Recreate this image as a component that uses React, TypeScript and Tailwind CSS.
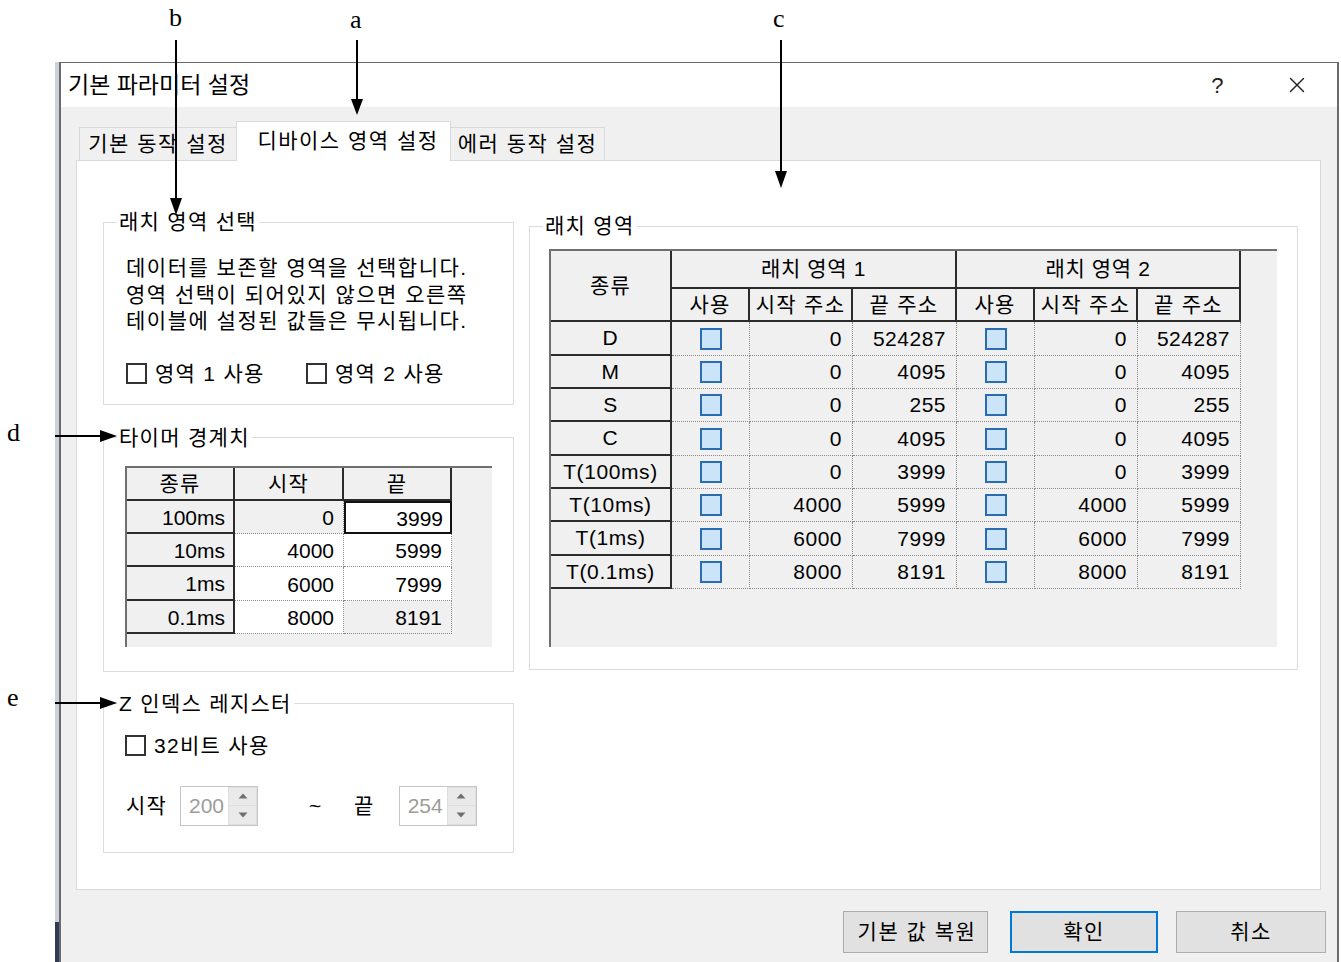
import { X } from 'lucide-react';

const leftRows = [
  ['100ms', '0', '3999'],
  ['10ms', '4000', '5999'],
  ['1ms', '6000', '7999'],
  ['0.1ms', '8000', '8191'],
];

const latchRows = [
  ['D', '0', '524287'],
  ['M', '0', '4095'],
  ['S', '0', '255'],
  ['C', '0', '4095'],
  ['T(100ms)', '0', '3999'],
  ['T(10ms)', '4000', '5999'],
  ['T(1ms)', '6000', '7999'],
  ['T(0.1ms)', '8000', '8191'],
];

function CheckBox({ label, className = '' }: { label: string; className?: string }) {
  return (
    <div className={`flex h-[22px] items-center gap-[8px] ${className}`}>
      <span className="h-[21px] w-[21px] border-2 border-[#333] bg-white" />
      <span className="leading-[22px]">{label}</span>
    </div>
  );
}

function Spinner({ value }: { value: string }) {
  return (
    <div className="flex h-[40px] w-[78px] border border-[#c6c6c6] bg-white">
      <div className="flex flex-1 items-center pl-[8px] tracking-normal text-[#9c9c9c]">{value}</div>
      <div className="flex w-[29px] flex-col gap-px bg-[#dedede] p-px">
        <div className="flex flex-1 items-center justify-center bg-[#eaeaea]">
          <svg width="10" height="6" viewBox="0 0 10 6"><path d="M5 0.5L9.5 5.5H0.5z" fill="#6f6f6f" /></svg>
        </div>
        <div className="flex flex-1 items-center justify-center bg-[#eaeaea]">
          <svg width="10" height="6" viewBox="0 0 10 6"><path d="M0.5 0.5H9.5L5 5.5z" fill="#6f6f6f" /></svg>
        </div>
      </div>
    </div>
  );
}

function Group({ title, children }: { title: string; children: React.ReactNode }) {
  return (
    <fieldset className="border border-[#dcdcdc]">
      <legend className="ml-[13px] px-[2px] leading-[24px]">{title}</legend>
      {children}
    </fieldset>
  );
}

function TimerTable() {
  const numCell = 'flex items-center justify-end border-r border-b border-dotted border-[#8a8a8a] pt-[3px] pr-[9px]';
  return (
    <div className="h-[181px] w-[367px] border-t-2 border-l-2 border-[#6f6f6f] bg-[#f0f0f0] tracking-normal">
      <div className="grid grid-cols-[108px_109px_108px] grid-rows-[33px_33px_33px_34px_33px]">
        {['종류', '시작', '끝'].map((h) => (
          <div key={h} className="flex items-center justify-center border-r-2 border-b-2 border-[#2b2b2b] pt-[2px] tracking-[1.3px]">
            {h}
          </div>
        ))}
        {leftRows.map(([name, start, end], i) => (
          <div key={name} className="contents">
            <div className="flex items-center justify-end border-r-2 border-b-2 border-[#2b2b2b] pt-[3px] pr-[8px]">{name}</div>
            <div className={`${numCell} ${i === 0 ? 'bg-[#f0f0f0]' : 'bg-white'}`}>{start}</div>
            {i === 0 ? (
              <div className="flex items-center justify-end border-2 border-[#111] bg-white pt-[3px] pr-[7px]">{end}</div>
            ) : (
              <div className={`${numCell} ${i === 3 ? 'bg-[#f0f0f0]' : 'bg-white'}`}>{end}</div>
            )}
          </div>
        ))}
      </div>
    </div>
  );
}

function LatchTable() {
  const head = 'flex items-center justify-center border-r-2 border-b-2 border-[#2b2b2b]';
  const cell = 'flex items-center justify-end border-r border-b border-dotted border-[#8a8a8a] pr-[10px] tracking-[0.5px]';
  return (
    <div className="h-[398px] w-[728px] border-t-2 border-l-2 border-[#6f6f6f] bg-[#f0f0f0]">
      <div className="grid grid-cols-[121px_78px_103px_104px_78px_103px_103px] grid-rows-[38px_33px_34px_33px_33px_34px_33px_33px_34px_33px]">
        <div className={`${head} row-span-2`}>종류</div>
        <div className={`${head} col-span-3 tracking-[0.6px]`}>래치 영역 1</div>
        <div className={`${head} col-span-3 tracking-[0.6px]`}>래치 영역 2</div>
        {['사용', '시작 주소', '끝 주소', '사용', '시작 주소', '끝 주소'].map((h, i) => (
          <div key={i} className={head}>
            {h}
          </div>
        ))}
        {latchRows.map(([name, start, end]) => (
          <div key={name} className="contents">
            <div className={`${head} tracking-[0.6px]`}>{name}</div>
            {[0, 1].map((g) => (
              <div key={g} className="contents">
                <div className="flex items-center justify-center border-r border-b border-dotted border-[#8a8a8a]">
                  <span className="h-[22px] w-[22px] border-2 border-[#2a6cb2] bg-[#cce4f7]" />
                </div>
                <div className={cell}>{start}</div>
                <div className={cell}>{end}</div>
              </div>
            ))}
          </div>
        ))}
      </div>
    </div>
  );
}

export default function App() {
  return (
    <div className="relative h-[962px] w-[1341px] overflow-hidden bg-white font-['Liberation_Sans','Noto_Sans_CJK_KR',sans-serif] text-[21px] tracking-[1.3px] text-black">
      <div className="flex pt-[62px] pl-[55px]">
        <div className="flex w-[4px] flex-col">
          <div className="h-[860px] bg-[#cdd1d9]" />
          <div className="flex-1 bg-[#2e3b56]" />
        </div>
        <div className="flex h-[900px] w-[1280px] flex-col border-t border-r-2 border-l-2 border-[#6a6a6a]">
          {/* title bar */}
          <div className="flex h-[44px] items-center justify-between bg-white pl-[7px] pr-[17px]">
            <span className="text-[23px] leading-none tracking-normal">기본 파라미터 설정</span>
            <div className="flex items-center gap-[36px]">
              <span className="w-[40px] text-center text-[22px] text-[#222]">?</span>
              <span className="flex w-[46px] justify-center">
                <X size={26} strokeWidth={1.3} color="#222" />
              </span>
            </div>
          </div>

          {/* client */}
          <div className="flex flex-1 flex-col bg-[#f0f0f0] pt-[14px]">
            <div className="ml-[18px] flex h-[39px] items-end tracking-[1.5px]">
              <div className="flex h-[33px] w-[157px] items-center justify-center border-t border-l border-[#d9d9d9] bg-[#f0f0f0]">
                기본 동작 설정
              </div>
              <div className="relative z-10 mb-[-1px] flex h-[40px] w-[215px] items-center justify-center border-x border-t border-[#d9d9d9] bg-white pb-[2px] pl-[9px]">
                디바이스 영역 설정
              </div>
              <div className="flex h-[33px] w-[154px] items-center justify-center border-t border-r border-[#d9d9d9] bg-[#f0f0f0]">
                에러 동작 설정
              </div>
            </div>

            <div className="ml-[15px] flex h-[730px] w-[1245px] gap-[15px] border border-[#d9d9d9] bg-white pt-[49px] pl-[26px]">
              <div className="flex w-[411px] flex-col">
                <Group title="래치 영역 선택">
                  <div className="pt-[21px] pb-[19px] pl-[22px]">
                    <p className="leading-[26.5px] tracking-[1.5px]">
                      데이터를 보존할 영역을 선택합니다.
                      <br />
                      영역 선택이 되어있지 않으면 오른쪽
                      <br />
                      테이블에 설정된 값들은 무시됩니다.
                    </p>
                    <div className="mt-[28px] flex">
                      <CheckBox label="영역 1 사용" className="w-[180px]" />
                      <CheckBox label="영역 2 사용" />
                    </div>
                  </div>
                </Group>

                <div className="mt-[21px]">
                  <Group title="타이머 경계치">
                    <div className="pt-[16px] pb-[24px] pl-[21px]">
                      <TimerTable />
                    </div>
                  </Group>
                </div>

                <div className="mt-[20px]">
                  <Group title="Z 인덱스 레지스터">
                    <div className="pt-[19px] pb-[26px] pl-[21px]">
                      <CheckBox label="32비트 사용" />
                      <div className="mt-[29px] flex items-center">
                        <span className="w-[55px] pl-[1px]">시작</span>
                        <Spinner value="200" />
                        <span className="ml-[51px] w-[12px]">~</span>
                        <span className="ml-[33px]">끝</span>
                        <span className="ml-[24px]">
                          <Spinner value="254" />
                        </span>
                      </div>
                    </div>
                  </Group>
                </div>
              </div>

              <div className="mt-[4px] w-[769px]">
                <Group title="래치 영역">
                  <div className="pt-[11px] pb-[22px] pl-[19px]">
                    <LatchTable />
                  </div>
                </Group>
              </div>
            </div>

            <div className="mt-[21px] flex tracking-[1.5px]">
              <div className="ml-[782px] flex h-[42px] w-[145px] items-center justify-center border border-[#adadad] bg-[#e1e1e1] pl-[3px]">
                기본 값 복원
              </div>
              <div className="ml-[22px] flex h-[42px] w-[148px] items-center justify-center border-2 border-[#0078d7] bg-[#e1e1e1]">
                확인
              </div>
              <div className="ml-[18px] flex h-[42px] w-[150px] items-center justify-center border border-[#adadad] bg-[#e1e1e1]">
                취소
              </div>
            </div>
          </div>
        </div>
      </div>

      {/* annotation letters and arrows */}
      <span className="absolute top-[-2px] left-[169px] font-['Liberation_Serif',serif] text-[26px] tracking-normal">b</span>
      <span className="absolute top-[0px] left-[350px] font-['Liberation_Serif',serif] text-[26px] tracking-normal">a</span>
      <span className="absolute top-[-1px] left-[773px] font-['Liberation_Serif',serif] text-[26px] tracking-normal">c</span>
      <span className="absolute top-[413px] left-[7px] font-['Liberation_Serif',serif] text-[26px] tracking-normal">d</span>
      <span className="absolute top-[678px] left-[7px] font-['Liberation_Serif',serif] text-[26px] tracking-normal">e</span>
      <svg className="pointer-events-none absolute top-0 left-0" width="1341" height="962">
        <g stroke="#000" strokeWidth="2">
          <line x1="176" y1="40" x2="176" y2="200" />
          <line x1="357" y1="40" x2="357" y2="100" />
          <line x1="781" y1="40" x2="781" y2="172" />
          <line x1="55" y1="436" x2="102" y2="436" />
          <line x1="55" y1="703" x2="102" y2="703" />
        </g>
        <g fill="#000">
          <polygon points="170,198 182,198 176,215" />
          <polygon points="351,99 363,99 357,115" />
          <polygon points="775,171 787,171 781,188" />
          <polygon points="100,430 100,442 117,436" />
          <polygon points="100,697 100,709 117,703" />
        </g>
      </svg>
    </div>
  );
}
